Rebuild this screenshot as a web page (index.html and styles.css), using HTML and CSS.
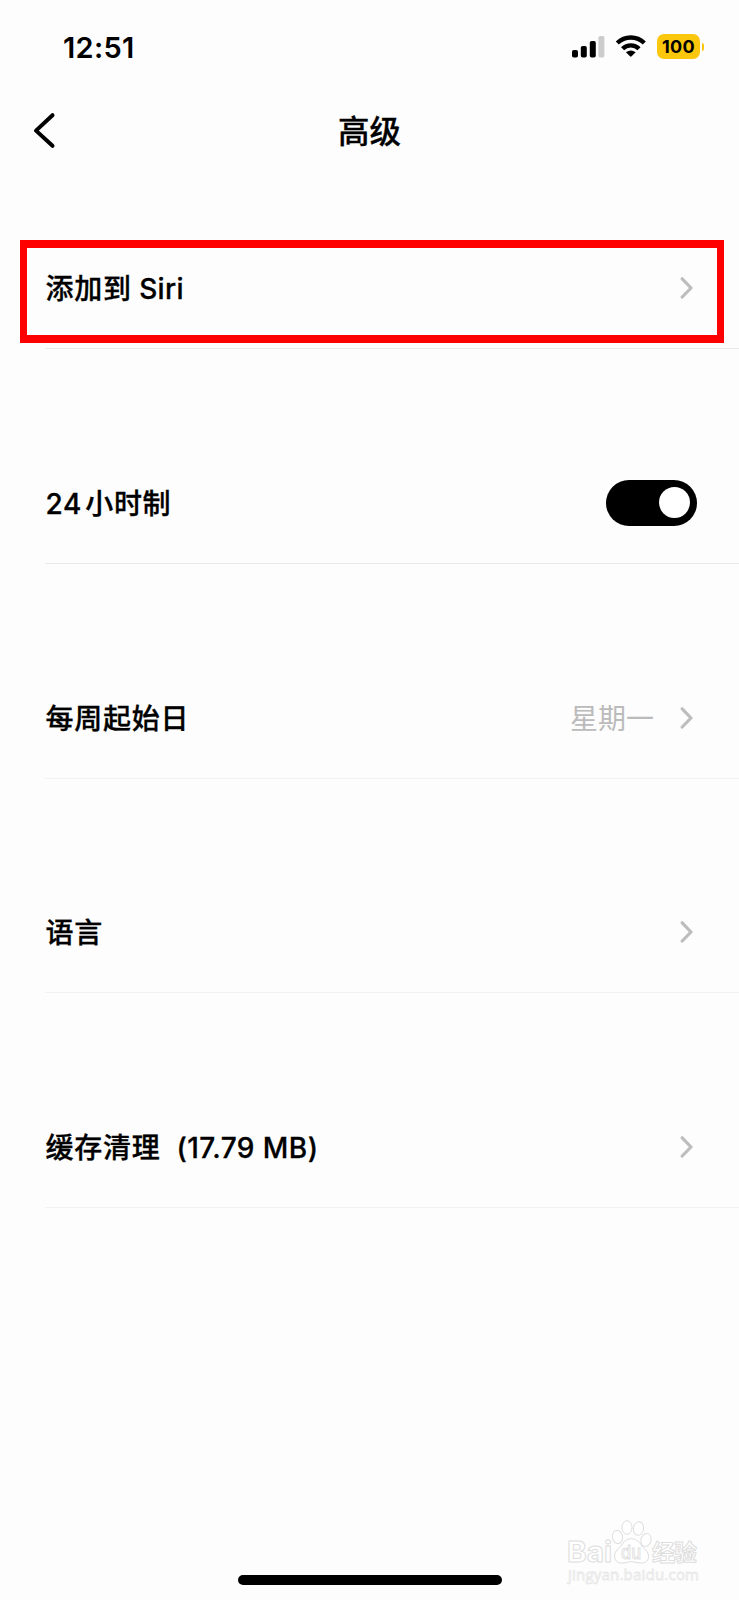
FILE: index.html
```html
<!DOCTYPE html>
<html lang="zh-CN">
<head>
<meta charset="utf-8">
<title>高级</title>
<link rel="stylesheet" href="styles.css">
</head>
<body>
<div class="screen">
  <header class="status">
    <span class="time">12:51</span>
    <div class="indicators">
      <svg class="signal" width="33" height="22" viewBox="0 0 33 22">
        <rect x="0" y="14" width="6" height="7.5" rx="1.8"/>
        <rect x="8.8" y="10" width="6" height="11.5" rx="1.8"/>
        <rect x="17.8" y="5" width="6" height="16.5" rx="1.8"/>
        <rect class="dim" x="26.4" y="0" width="6" height="21.5" rx="1.8"/>
      </svg>
      <svg class="wifi" width="32" height="24" viewBox="0 0 32 24">
        <path class="arc" d="M2.3 9A19.4 19.4 0 0 1 29.3 9"/>
        <path class="arc" d="M7.6 14.8A11.6 11.6 0 0 1 24 14.800"/>
        <path d="M10.9 18.2Q15.8 14.6 20.7 18.2L16.6 22.3Q15.8 23 15 22.3Z"/>
      </svg>
      <div class="battery"><span class="level">100</span></div>
      <span class="battery-tip"></span>
    </div>
  </header>
  <nav class="nav">
    <svg class="back" width="24" height="38" viewBox="0 0 24 38"><path d="M20.5 3.2L4 18.6L20.5 33.8"/></svg>
    <h1 class="title">高级</h1>
  </nav>
  <main class="list">
    <section class="row">
      <span class="label">添加到<span class="latin siri">Siri</span></span>
      <svg class="chevron" width="14" height="24" viewBox="0 0 14 24"><path d="M2.2 2.8L11 12L2.2 21"/></svg>
      <span class="highlight"></span>
    </section>
    <section class="row">
      <span class="label"><span class="latin hours">24</span>小时制</span>
      <span class="toggle"><span class="knob"></span></span>
    </section>
    <section class="row">
      <span class="label">每周起始日</span>
      <span class="value">星期一</span>
      <svg class="chevron" width="14" height="24" viewBox="0 0 14 24"><path d="M2.2 2.8L11 12L2.2 21"/></svg>
    </section>
    <section class="row">
      <span class="label">语言</span>
      <svg class="chevron" width="14" height="24" viewBox="0 0 14 24"><path d="M2.2 2.8L11 12L2.2 21"/></svg>
    </section>
    <section class="row">
      <span class="label">缓存清理<span class="latin size">(17.79 MB)</span></span>
      <svg class="chevron" width="14" height="24" viewBox="0 0 14 24"><path d="M2.2 2.8L11 12L2.2 21"/></svg>
    </section>
  </main>
  <footer class="footer">
    <svg class="watermark" width="140" height="70" viewBox="0 0 140 70">
      <text class="brand" x="4" y="45" textLength="45" lengthAdjust="spacingAndGlyphs">Bai</text>
      <g class="paw">
        <ellipse cx="54.5" cy="20" rx="5" ry="6.6" transform="rotate(-12 54.5 20)"/>
        <ellipse cx="64" cy="10.5" rx="5" ry="6.8"/>
        <ellipse cx="75.5" cy="11.5" rx="5" ry="6.8" transform="rotate(8 75.5 11.5)"/>
        <ellipse cx="83" cy="23" rx="5" ry="6.6" transform="rotate(15 83 23)"/>
        <path d="M60 26Q68 17 77 26Q80 31 84 34.500C88 41 84 47 77 46Q68 43 60 46C52 47 49 39 54 33Q58 30 60 26Z"/>
      </g>
      <text class="du" x="58" y="42" textLength="20" lengthAdjust="spacingAndGlyphs">du</text>
      <text class="cn" x="89" y="44" textLength="45">经验</text>
      <text class="url" x="5" y="63" textLength="131">jingyan.baidu.com</text>
    </svg>
    <span class="home-bar"></span>
  </footer>
</div>
</body>
</html>
```
FILE: styles.css
```css
* { box-sizing: border-box; }
body { margin: 0; background: #fdfdfd; color: #000; font-family: "Inter", "Noto Sans CJK SC", sans-serif; }
.screen { display: flex; flex-direction: column; width: 739px; height: 1600px; overflow: hidden; }
.status { display: flex; justify-content: space-between; height: 94px; padding: 30px 35px 0 63px; }
.time { font-size: 29px; font-weight: 600; letter-spacing: .3px; line-height: 35px; }
.indicators { display: flex; align-items: flex-start; padding-top: 4px; }
.signal { margin-top: 2px; }
.signal .dim { fill: #ccc; }
.wifi { margin: 0 10px; }
.wifi .arc { fill: none; stroke: #000; stroke-width: 4.4; }
.battery { display: flex; align-items: center; justify-content: center; width: 43px; height: 25px; border-radius: 7px; background: #fbc70d; }
.level { font-size: 18px; font-weight: 700; line-height: 25px; letter-spacing: .3px; }
.battery-tip { width: 2px; height: 8px; margin: 9px 0 0 2px; border-radius: 0 2px 2px 0; background: #fbc70d; }
.nav { display: grid; grid-template-columns: 62px 1fr 62px; align-items: center; height: 74px; }
.back { margin-left: 31.5px; }
.back path { fill: none; stroke: #000; stroke-width: 4; stroke-linecap: round; stroke-linejoin: round; }
.title { margin: 0; padding-top: 1px; text-align: center; font-size: 31.5px; font-weight: 500; line-height: 44px; -webkit-text-stroke: .3px #000; }
.list { display: flex; flex-direction: column; gap: 94.8px; padding: 61px 0 0 45px; }
.row { position: relative; display: flex; align-items: center; height: 120px; padding-right: 45px; border-bottom: 1px solid #e9e9e9; }
.row:nth-child(n+3) { border-color: #f2f2f2; }
.label { flex: 1; padding-left: .6px; font-size: 28px; font-weight: 500; letter-spacing: .7px; line-height: 40px; -webkit-text-stroke: .3px #000; }
.row:nth-child(n+2) .label, .value { padding-top: 1.2px; }
.latin { font-size: 28px; letter-spacing: .3px; }
.siri { margin-left: 7.5px; }
.hours { margin-right: 3px; letter-spacing: .7px; }
.size { margin-left: 16px; letter-spacing: .45px; }
.value { margin-right: 26px; color: #bbb; font-size: 28px; font-weight: 400; line-height: 40px; }
.chevron { margin-top: -1px; }
.chevron path { fill: none; stroke: #bdbdbd; stroke-width: 3.2; stroke-linecap: round; stroke-linejoin: round; }
.toggle { display: flex; align-items: center; justify-content: flex-end; width: 91px; height: 46px; margin: -1px -3.3px 0 0; padding-right: 7px; border-radius: 23px; background: #000; }
.knob { width: 31px; height: 31px; border-radius: 50%; background: #fff; }
.highlight { position: absolute; left: -25px; top: 11px; width: 704px; height: 103px; border: 8px solid #f00; border-width: 8px 7px; }
.footer { display: flex; flex-direction: column; align-items: center; margin-top: auto; padding-bottom: 15px; }
.watermark { align-self: flex-end; margin-right: 36px; margin-bottom: -12px; fill: #fff; stroke: #dedede; stroke-width: 1; font-family: "Inter", "Noto Sans CJK SC", sans-serif; }
.brand { font-size: 29px; font-weight: 700; }
.du { font-size: 19px; font-weight: 500; }
.cn { font-size: 23px; font-weight: 700; }
.url { font-family: "Open Sans", sans-serif; font-size: 15px; stroke: #e8e8e8; stroke-width: .8; }
.home-bar { width: 264px; height: 10px; border-radius: 5px; background: #000; }
```
